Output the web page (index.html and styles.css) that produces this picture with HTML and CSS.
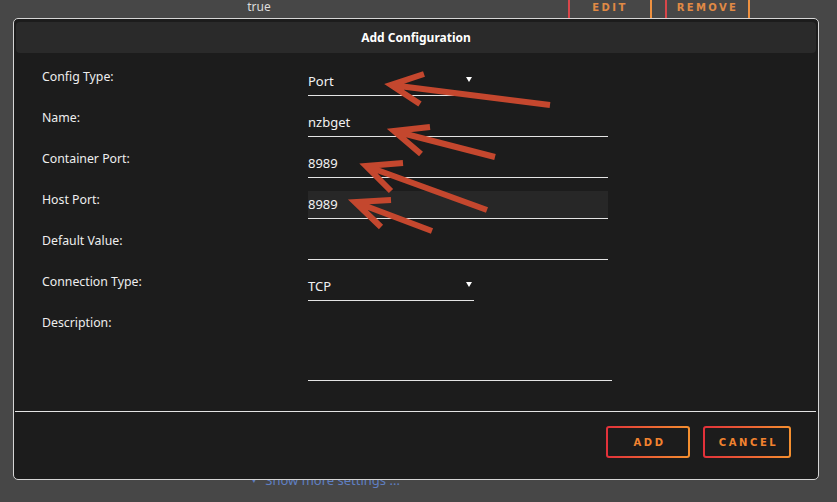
FILE: index.html
```html
<!DOCTYPE html>
<html lang="en">
<head>
    <meta charset="UTF-8">
    <title>Add Configuration</title>
    <link rel="stylesheet" href="styles.css">
</head>
<body>

    <div class="page">
        <div class="page-row">
            <div class="cell-value">true</div>
            <div class="row-actions">
                <span class="btn-ghost">EDIT</span>
                <span class="btn-ghost">REMOVE</span>
            </div>
        </div>
        <div class="show-more"><span class="caret">&#9660;</span> Show more settings ...</div>
    </div>

    <div class="modal">
        <div class="modal-head">Add Configuration</div>

        <div class="modal-body">
            <label class="field-label">Config Type:</label>
            <div class="field select">Port<span class="tri"></span></div>

            <label class="field-label">Name:</label>
            <div class="field">nzbget</div>

            <label class="field-label">Container Port:</label>
            <div class="field">8989</div>

            <label class="field-label">Host Port:</label>
            <div class="field focused">8989</div>

            <label class="field-label">Default Value:</label>
            <div class="field"></div>

            <label class="field-label">Connection Type:</label>
            <div class="field select">TCP<span class="tri"></span></div>

            <label class="field-label">Description:</label>
            <div class="field textarea"></div>
        </div>

        <div class="modal-foot">
            <button class="btn">ADD</button>
            <button class="btn wide">CANCEL</button>
        </div>
    </div>

    <!-- red annotation arrows -->
    <svg class="notes" width="837" height="502" viewBox="0 0 837 502">
        <g fill="none" stroke="#c4472e" stroke-width="6" stroke-linejoin="miter">
            <path d="M550 105 L391 85 M424 74 L391 85 L420 104"/>
            <path d="M495 157 L394 131 M430 127 L394 131 L421 154"/>
            <path d="M487 210 L366 166 M403 163 L366 166 L391 191"/>
            <path d="M432 231 L355 202 M391 200 L355 202 L381 227"/>
        </g>
    </svg>

</body>
</html>
```

FILE: styles.css
```css
body {
    margin: 0;
    background: #474747;
    font-family: "Noto Sans", "Open Sans", sans-serif;
    color: #eee;
    width: 837px;
    height: 502px;
    overflow: hidden;
    position: relative;
}

/* page behind the dialog */
.page-row {
    display: flex;
    align-items: center;
    height: 32px;
    margin-top: -9px;
}
.cell-value {
    width: 518px;
    text-align: center;
    font-size: 12px;
    line-height: 14px;
    color: #ddd;
}
.row-actions {
    display: flex;
    gap: 13px;
    margin-left: 50px;
}
.btn-ghost {
    display: flex;
    align-items: center;
    justify-content: center;
    width: 80px;
    height: 32px;
    border-left: 2px solid #d9464a;
    border-right: 2px solid #ef9140;
    font-family: "DejaVu Sans", sans-serif;
    font-weight: bold;
    font-size: 10px;
    letter-spacing: 2.4px;
    color: #e08a45;
}
.btn-ghost + .btn-ghost {
    width: 81px;
}
.show-more {
    margin: 448px 0 0 250px;
    font-size: 13px;
    line-height: 18px;
    color: #5f7fc2;
}
.show-more .caret {
    font-size: 8px;
    vertical-align: 2px;
    margin-right: 4px;
}

/* dialog */
.modal {
    position: absolute;
    left: 13px;
    top: 18px;
    width: 806px;
    height: 462px;
    box-sizing: border-box;
    border: 1px solid #d6d6d6;
    border-radius: 5px;
    background: #1c1c1c;
    padding: 3px 2px 0;
}
.modal-head {
    height: 31px;
    line-height: 31px;
    background: #2a2a2a;
    border-radius: 4px;
    text-align: center;
    font-weight: bold;
    font-size: 12px;
    color: #fff;
}
.modal-body {
    display: grid;
    grid-template-columns: 266px 304px;
    row-gap: 13px;
    align-items: start;
    padding: 15px 0 30px 26px;
}
.field-label {
    font-size: 12.3px;
    line-height: 18px;
    color: #eee;
}
.field {
    position: relative;
    width: 300px;
    height: 27px;
    line-height: 27px;
    border-bottom: 1px solid #e4e4e4;
    font-size: 13px;
    color: #f2f2f2;
}
.field.select {
    width: 166px;
}
.field.focused {
    background: #272727;
}
.field.textarea {
    width: 304px;
    height: 66px;
}
.tri {
    position: absolute;
    right: 2px;
    top: 9px;
    border-left: 3px solid transparent;
    border-right: 3px solid transparent;
    border-top: 5px solid #fff;
}

.modal-foot {
    display: flex;
    justify-content: flex-end;
    gap: 13px;
    margin: 0 0 0 -1px;
    border-top: 1px solid #e4e4e4;
    padding: 14px 25px 0 0;
}
.btn {
    width: 84px;
    height: 32px;
    border: 2px solid transparent;
    border-radius: 3px;
    background:
        linear-gradient(#1c1c1c, #1c1c1c) padding-box,
        linear-gradient(90deg, #e2303a, #f5902f) border-box;
    font-family: "DejaVu Sans", sans-serif;
    font-weight: bold;
    font-size: 10px;
    letter-spacing: 2.6px;
    color: #f2832f;
    padding: 0 0 0 3px;
}
.btn.wide {
    width: 88px;
}

.notes {
    position: absolute;
    left: 0;
    top: 0;
}
```
